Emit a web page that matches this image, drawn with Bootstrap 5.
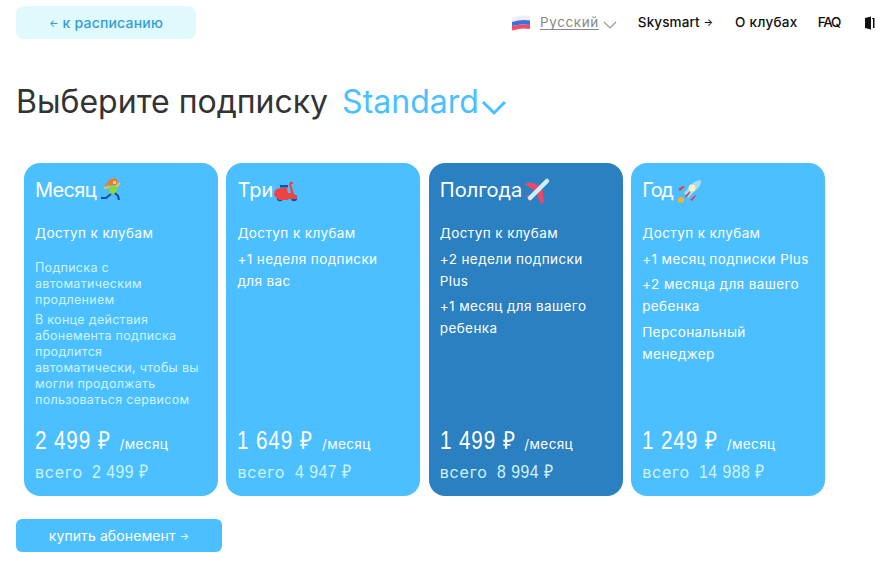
<!DOCTYPE html>
<html lang="ru">
<head>
  <meta charset="UTF-8">
  <title>Выберите подписку</title>
  <link rel="stylesheet" href="https://cdn.jsdelivr.net/npm/bootstrap@5.3.0/dist/css/bootstrap.min.css">
  <style>
    body {
      background-color: #fff;
      font-family: "Inter", "Noto Sans", sans-serif;
      color: #333;
      width: 894px;
      height: 579px;
      overflow: hidden;
    }
    .page-wrap {
      padding: 6px 0 0 16px;
    }
    .back-btn {
      width: 180px;
      height: 33px;
      background-color: #e0f9fd;
      color: #2e9fd8;
      border: 0;
      border-radius: 8px;
      font-size: 14px;
      font-weight: 500;
      letter-spacing: .2px;
      padding: 0;
    }
    .small-arrow {
      font-size: 10px;
      vertical-align: 1px;
    }
    .top-menu {
      margin-left: 315px;
      height: 33px;
      font-size: 13.5px;
      font-weight: 500;
      color: #111;
    }
    .top-menu a {
      color: #111;
      text-decoration: none;
    }
    .flag-icon {
      margin-right: 9px;
    }
    .top-menu .lang-link {
      color: #888;
      text-decoration: underline;
      text-underline-offset: 2px;
      font-weight: 400;
      letter-spacing: .6px;
    }
    .top-chevron {
      margin: 4px 21px 0 4px;
    }
    .menu-sky {
      margin-right: 22px;
      letter-spacing: .1px;
    }
    .menu-clubs {
      margin-right: 20px;
      letter-spacing: .3px;
    }
    .faq-link {
      letter-spacing: -1.2px;
      margin-right: 24px;
    }
    .page-title {
      margin: 43px 0 0;
      height: 40px;
      font-size: 32px;
      font-weight: 400;
      line-height: 40px;
      color: #333;
    }
    .title-accent {
      color: #4bbfff;
      margin-left: 5px;
    }
    .title-arrow {
      vertical-align: -3px;
      margin-left: 2px;
    }
    .plans {
      margin: 41px 0 0 8px;
      gap: 8.4px;
    }
    .plan-box {
      width: 194px;
      height: 333px;
      background-color: #4bbfff;
      color: #fff;
      border-radius: 16px;
      padding: 13px 11px 0;
    }
    .plan-box.is-active {
      background-color: #2b80c1;
    }
    .plan-name {
      height: 29px;
      font-size: 20px;
      line-height: 29px;
      font-weight: 400;
    }
    .plan-name svg {
      margin-top: -4px;
      flex: none;
    }
    .name-month { letter-spacing: -.6px; }
    .name-year { letter-spacing: -1.4px; }
    .ic-run { margin-left: -3px; }
    .ic-scooter { margin-left: -3px; }
    .ic-plane { margin-left: -2px; }
    .ic-rocket { margin-left: -3px; }
    .plan-feats {
      margin-top: 17px;
      font-size: 13.5px;
      line-height: 22px;
      letter-spacing: .4px;
    }
    .plan-feats p {
      margin: 0 0 3.5px;
    }
    .plan-note {
      margin-top: 16px;
      width: 168px;
      font-size: 12.5px;
      line-height: 16px;
      letter-spacing: .3px;
      color: #cdf5ff;
    }
    .plan-note p {
      margin: 0 0 4px;
    }
    .plan-price {
      left: 11px;
      bottom: 37px;
      line-height: 30px;
      white-space: nowrap;
    }
    .plan-sum {
      left: 11px;
      bottom: 12px;
      line-height: 24px;
      font-size: 16px;
      letter-spacing: .8px;
      color: #cdf5ff;
      white-space: nowrap;
    }
    .price-big {
      display: inline-block;
      font-family: "Liberation Sans", sans-serif;
      font-size: 25px;
      letter-spacing: 1px;
      transform: scaleX(.83);
      transform-origin: left center;
      margin-right: -7px;
    }
    .price-small {
      display: inline-block;
      font-family: "Liberation Sans", sans-serif;
      font-size: 19px;
      letter-spacing: .6px;
      margin-left: 4px;
      transform: scaleX(.83);
      transform-origin: left center;
    }
    .price-unit {
      font-size: 13.5px;
      letter-spacing: .4px;
    }
    .buy-btn {
      width: 206px;
      height: 33px;
      margin-top: 23px;
      background-color: #4bbfff;
      color: #fff;
      border: 0;
      border-radius: 6px;
      font-size: 14px;
      letter-spacing: .1px;
      padding: 0;
    }
    .buy-btn:hover {
      background-color: #2b80c1;
      color: #fff;
    }
  </style>
</head>
<body>

  <div class="page-wrap">
    <div class="d-flex align-items-center">
      <button class="btn back-btn"><span class="small-arrow">←</span> к расписанию</button>
      <div class="top-menu d-flex align-items-center">
        <svg width="20" height="16" viewBox="0 0 20 16" class="flag-icon">
          <path d="M1 3Q10 -.5 19 1V5.500Q10 4 1 7z" fill="#eeeef6"/>
          <path d="M1 7Q10 4 19 5.500V10Q10 8.500 1 11z" fill="#3f6fd8"/>
          <path d="M1 11Q10 8.500 19 10V13Q19 14 18 14 10 12.500 2 15.500 1 15.500 1 14z" fill="#ee4d6a"/>
        </svg>
        <a href="#" class="lang-link">Русский</a>
        <svg width="14" height="8" viewBox="0 0 14 8" class="top-chevron"><path d="M1 1l6 6 6-6" fill="none" stroke="#999" stroke-width="1.2"/></svg>
        <a href="#" class="menu-sky">Skysmart <span class="small-arrow">→</span></a>
        <a href="#" class="menu-clubs">О клубах</a>
        <a href="#" class="faq-link">FAQ</a>
        <svg width="11" height="14" viewBox="0 0 11 14"><path d="M1 2 7 .5V13.500L1 12zM8 2h2.500v10H9V3H8z" fill="#111"/></svg>
      </div>
    </div>

    <h1 class="page-title">Выберите подписку <span class="title-accent">Standard</span><svg width="26" height="16" viewBox="0 0 26 16" class="title-arrow"><path d="M2 2l11 11L24 2" fill="none" stroke="#4bbfff" stroke-width="3"/></svg></h1>

    <div class="plans d-flex">
      <div class="plan-box position-relative">
        <div class="plan-name d-flex"><span class="name-month">Месяц</span>
          <svg class="ic-run" width="35" height="35" viewBox="0 0 35 35">
            <path d="M16 15l-5 1M23 15l4-4" stroke="#f6c244" stroke-width="1.800" fill="none"/>
            <path d="M16 14l7-1 1 8-7 1z" fill="#8fd63c"/>
            <path d="M12 15q2-6 6-8 5-2 6 1t-1 5h-5l-3 0z" fill="#ef7a2a"/>
            <path d="M20 9h3v3h-3z" fill="#f6c79a"/>
            <path d="M18 22l-5 4H8" stroke="#1c4f9e" stroke-width="2.200" fill="none"/>
            <path d="M22 21l3 3 1 4" stroke="#1c4f9e" stroke-width="2.200" fill="none"/>
          </svg>
        </div>
        <div class="plan-feats"><p>Доступ к клубам</p></div>
        <div class="plan-note">
          <p>Подписка с автоматическим продлением</p>
          <p>В конце действия абонемента подписка продлится автоматически, чтобы вы могли продолжать пользоваться сервисом</p>
        </div>
        <div class="plan-price position-absolute"><span class="price-big">2 499 ₽</span><span class="price-unit">/месяц</span></div>
        <div class="plan-sum position-absolute">всего <span class="price-small">2 499 ₽</span></div>
      </div>

      <div class="plan-box position-relative">
        <div class="plan-name d-flex"><span>Три</span>
          <svg class="ic-scooter" width="35" height="35" viewBox="0 0 35 35">
            <circle cx="10" cy="26" r="3.200" fill="#1c4f9e"/>
            <circle cx="24" cy="26" r="3.200" fill="#1c4f9e"/>
            <path d="M10 13h8v2.500h-8z" fill="#1c4f9e"/>
            <path d="M4 23q0-7 7-7h6l1 5h3l-2-9 1-2h3v2h-2l3 10 3 3v2h-8l-2 1H9z" fill="#ef4343"/>
          </svg>
        </div>
        <div class="plan-feats">
          <p>Доступ к клубам</p>
          <p>+1 неделя подписки<br>для вас</p>
        </div>
        <div class="plan-price position-absolute"><span class="price-big">1 649 ₽</span><span class="price-unit">/месяц</span></div>
        <div class="plan-sum position-absolute">всего <span class="price-small">4 947 ₽</span></div>
      </div>

      <div class="plan-box is-active position-relative">
        <div class="plan-name d-flex"><span>Полгода</span>
          <svg class="ic-plane" width="35" height="35" viewBox="0 0 35 35">
            <path d="M5 12l4-2 12 4-5 6zM16 20l6-5 2 15-3 2zM6 23l3 0 3 3-1 4-3-3z" fill="#f0466a"/>
            <path d="M10 26 27 9" stroke="#cdeefb" stroke-width="4.500" stroke-linecap="round"/>
          </svg>
        </div>
        <div class="plan-feats">
          <p>Доступ к клубам</p>
          <p>+2 недели подписки Plus</p>
          <p>+1 месяц для вашего ребенка</p>
        </div>
        <div class="plan-price position-absolute"><span class="price-big">1 499 ₽</span><span class="price-unit">/месяц</span></div>
        <div class="plan-sum position-absolute">всего <span class="price-small">8 994 ₽</span></div>
      </div>

      <div class="plan-box position-relative">
        <div class="plan-name d-flex"><span class="name-year">Год</span>
          <svg class="ic-rocket" width="35" height="35" viewBox="0 0 35 35">
            <path d="M14 21 23 11q4-3 8-3 0 5-3 8L18 26z" fill="#a9dcf7"/>
            <circle cx="22" cy="16" r="3.400" fill="#fdf3b4"/>
            <path d="M8 17l5-3 2 1-5 4zM15 24l5-5 0 2-4 5zM20 28l5-5 1 1-4 5z" fill="#e33d52"/>
            <circle cx="11" cy="28" r="3" fill="#f6b326"/>
          </svg>
        </div>
        <div class="plan-feats">
          <p>Доступ к клубам</p>
          <p>+1 месяц подписки Plus</p>
          <p>+2 месяца для вашего ребенка</p>
          <p>Персональный менеджер</p>
        </div>
        <div class="plan-price position-absolute"><span class="price-big">1 249 ₽</span><span class="price-unit">/месяц</span></div>
        <div class="plan-sum position-absolute">всего <span class="price-small">14 988 ₽</span></div>
      </div>
    </div>

    <button class="btn buy-btn">купить абонемент <span class="small-arrow">→</span></button>
  </div>

  <script src="https://cdn.jsdelivr.net/npm/bootstrap@5.3.0/dist/js/bootstrap.bundle.min.js"></script>
</body>
</html>
